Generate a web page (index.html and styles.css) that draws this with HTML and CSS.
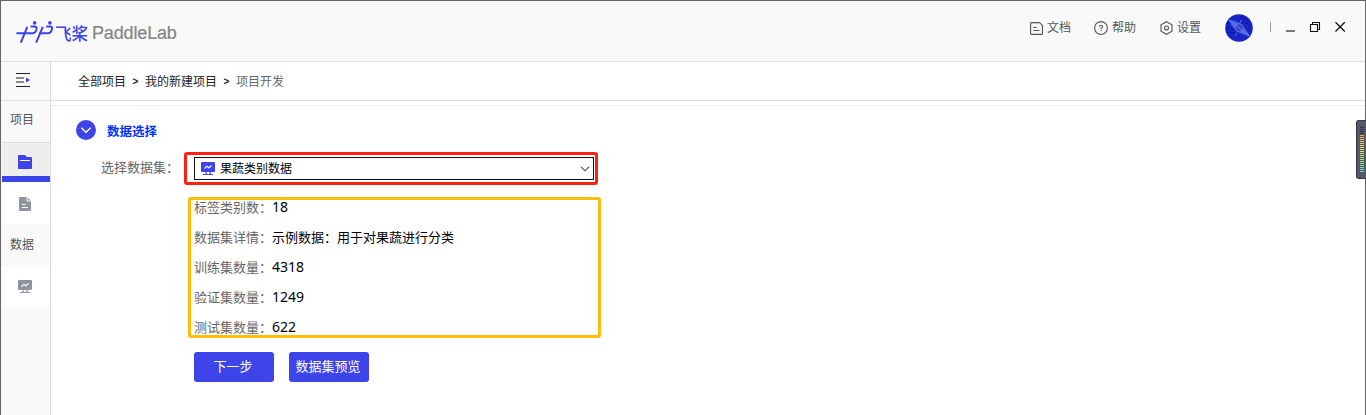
FILE: index.html
```html
<!DOCTYPE html>
<html lang="zh-CN">
<head>
<meta charset="utf-8">
<title>PaddleLab</title>
<link rel="stylesheet" href="styles.css">
</head>
<body>
<svg width="0" height="0" class="defs">
  <symbol id="monitor" viewBox="0 0 14 13">
    <path d="M1 0h12q1 0 1 1v8q0 1-1 1H1q-1 0-1-1V1q0-1 1-1zM4.5 10h1.2v2H4.5zM8.5 10h1.2v2H8.5zM2 12h10v1H2z" fill="currentColor"/>
    <path d="M3.5 6.5 6 4.2l1.8 1.7L10.5 3.5" fill="none" stroke="#fff" stroke-width="1.1"/>
  </symbol>
</svg>
<div class="window">
  <header class="header">
    <div class="brand">
      <svg width="38" height="24" viewBox="0 0 38 24" fill="none" stroke="#3b42e8" stroke-width="2">
        <path d="M.5 12.2H16.5Q19.2 12.2 20.3 9Q21.4 5.4 18.4 5.4H14.5M11.3 5.8 4.8 21.6"/>
        <path d="M23 12.2H32Q34.7 12.2 35.8 9Q36.9 5.4 33.9 5.4H30.2M26.8 5.8 20.2 21.6"/>
        <g fill="#3b42e8" stroke="none"><circle cx="18.6" cy="1.9" r="1.8"/><circle cx="33.9" cy="1.9" r="1.8"/></g>
      </svg>
      <span class="brand-cn">飞桨</span>
      <span class="brand-en">PaddleLab</span>
    </div>
    <nav class="tools">
      <a class="tool doc"><svg width="13" height="13" viewBox="0 0 13 13"><path d="M1.5.6h8l2.9 2.8v8q0 1-1 1H1.6q-1 0-1-1V1.6q0-1 .9-1zM3.2 5.5h3.6M3.2 8.5h6.3"/></svg>文档</a>
      <a class="tool help"><svg width="14" height="14" viewBox="0 0 14 14"><circle cx="7" cy="7" r="6.4"/><path d="M5.4 5.8Q5.5 4.2 7 4.2T8.6 5.7Q8.5 6.5 7 7.3V8.3M7 9.2v1"/></svg>帮助</a>
      <a class="tool settings"><svg width="13" height="14" viewBox="0 0 13 14"><path d="M6.5.7 12 3.8v6.4l-5.5 3.1L1 10.2V3.8z"/><circle cx="6.5" cy="7" r="2"/></svg>设置</a>
      <svg class="avatar" width="28" height="28" viewBox="0 0 28 28">
        <circle cx="14" cy="14" r="13.8" fill="#1724c4"/>
        <path d="M1 10q7-4 11 1M1 15q5-3 9 1M2 19q6-2 10 2M14 3q7 0 10 5M17 8q6 0 9 6M19 18q4-1 7-1" fill="none" stroke="#0e18a2"/>
        <path d="M3.5 5.5Q14 7 18 12T25.5 22.5Q15 20 10.5 16T3.5 5.5z" fill="#4664e5"/>
        <circle cx="14.2" cy="13.8" r="4" fill="#3543bd" stroke="#6878e4" stroke-width=".8"/>
        <path d="m4 6 20 16M16.5 6l-1.5 3M12 19l-2 3" stroke="#7189ee" stroke-width=".8"/>
      </svg>
      <i class="divider"></i>
      <svg class="controls" width="62" height="12" viewBox="0 0 62 12" fill="none" stroke="#111" stroke-width="1.1">
        <path d="M1 10h9" stroke="#777" stroke-width="2"/>
        <path d="M25.5 3.5h7v7h-7zM27.5 3.5v-2h7v7h-2"/>
        <path d="m50.5 1.2 9.3 9.3M59.8 1.2l-9.3 9.3" stroke-width="1.3"/>
      </svg>
    </nav>
  </header>
  <div class="body">
    <aside class="sidebar">
      <div class="toggle">
        <svg width="14" height="14" viewBox="0 0 14 14"><path d="M0 .5h14M0 5h8M0 9h8M0 13.5h14" stroke="#222" stroke-width="1.2"/><path d="m10 4.5 4 2.5-4 2.5z" fill="#3b42e8"/></svg>
      </div>
      <div class="group first">项目</div>
      <div class="item active">
        <svg width="14" height="14" viewBox="0 0 14 14"><path d="M1 0h6l2 2h4q1 0 1 1v10q0 1-1 1H1q-1 0-1-1V1q0-1 1-1z" fill="#3d45ea"/><path d="M2 5.5h10" stroke="#fff"/></svg>
      </div>
      <div class="item file">
        <svg width="12" height="14" viewBox="0 0 12 14"><path d="M1 0h7l4 4v9q0 1-1 1H1q-1 0-1-1V1q0-1 1-1z" fill="#9093a0"/><path d="M8 0v4h4M3 7.5h3.5M3 10.5h6" stroke="#fff" fill="none"/></svg>
      </div>
      <div class="group">数据</div>
      <div class="item data"><svg width="14" height="13"><use href="#monitor"/></svg></div>
    </aside>
    <main class="main">
      <div class="crumbs"><span>全部项目</span><b>&gt;</b><span>我的新建项目</span><b>&gt;</b><span class="current">项目开发</span></div>
      <div class="rule"></div>
      <section class="panel">
        <h2 class="title">
          <svg width="20" height="20" viewBox="0 0 20 20" fill="none"><circle cx="10" cy="10" r="10" fill="#3d45ea"/><path d="m5.3 7.8 4.7 4.5 4.7-4.5" stroke="#fff" stroke-width="1.5"/></svg>
          <span>数据选择</span>
        </h2>
        <div class="field">
          <label class="label">选择数据集：</label>
          <div class="highlight">
            <div class="select">
              <svg width="14" height="13"><use href="#monitor"/></svg>
              <span>果蔬类别数据</span>
              <svg class="caret" width="10" height="6" viewBox="0 0 10 6" fill="none"><path d="m1 .8 4 4 4-4" stroke="#444" stroke-width="1.1"/></svg>
            </div>
          </div>
        </div>
        <dl class="details">
          <div><dt>标签类别数：</dt><dd class="num">18</dd></div>
          <div><dt>数据集详情：</dt><dd>示例数据：用于对果蔬进行分类</dd></div>
          <div><dt>训练集数量：</dt><dd class="num">4318</dd></div>
          <div><dt>验证集数量：</dt><dd class="num">1249</dd></div>
          <div><dt>测试集数量：</dt><dd class="num">622</dd></div>
        </dl>
        <div class="actions"><button>下一步</button><button>数据集预览</button></div>
      </section>
    </main>
  </div>
  <div class="meter"><i></i></div>
</div>
</body>
</html>
```

FILE: styles.css
```css
* { box-sizing: border-box; }
body { margin: 0; font: 13px/14px "Noto Sans CJK SC", sans-serif; color: #000; overflow: hidden; }
svg { display: block; flex: none; }
.defs { position: absolute; }
.window { height: 415px; border: 1px solid #666; border-bottom: 0; display: flex; flex-direction: column; background: #fff; position: relative; }
.header { height: 61px; flex: none; border-bottom: 1px solid #ddd; background: #f9f9f9; display: flex; justify-content: space-between; }
.brand { display: flex; align-items: center; padding: 4px 0 0 15px; height: 60px; }
.brand-cn { color: #3b42e8; font-size: 16.5px; line-height: 20px; font-weight: 500; width: 38px; padding-left: 1px; white-space: nowrap; }
.brand-en { color: #858585; font: 18px/20px "Liberation Sans", sans-serif; letter-spacing: -.15px; -webkit-text-stroke: .2px #858585; }
.tools { display: flex; align-items: center; height: 52px; color: #555; font-size: 12px; padding-right: 18px; }
.tool { display: flex; align-items: center; gap: 4px; }
.tool svg { fill: none; stroke: #555; stroke-width: 1.1; margin-top: 2px; }
.help { margin-left: 23px; }
.settings { margin-left: 24px; }
.avatar { margin-left: 24px; margin-top: 2px; }
.divider { width: 1px; height: 10px; background: #999; margin: 0 14px 0 17px; }
.body { display: flex; flex: 1; min-height: 0; }
.sidebar { width: 50px; flex: none; border-right: 1px solid #ddd; background: #f9f9f9; }
.toggle { height: 39px; border-bottom: 1px solid #ddd; padding: 11px 0 0 15px; }
.group { height: 42px; line-height: 39px; padding-left: 9px; color: #555; font-size: 12px; }
.first { height: 41px; line-height: 36px; }
.item { margin-left: 1px; padding-right: 2px; display: flex; justify-content: center; align-items: center; background: #fff; color: #9093a0; }
.active { height: 40px; background: #eee; border-top: 1px solid #ddd; border-bottom: 6px solid #3d45ea; padding-top: 5px; }
.file { height: 42px; padding-top: 2px; }
.data { height: 40px; }
.main { flex: 1; }
.crumbs { height: 39px; border-bottom: 1px solid #ddd; display: flex; align-items: center; padding-left: 27px; font-size: 12px; color: #222; }
.crumbs b { font: 700 10px/12px "Liberation Sans", sans-serif; width: 19px; text-align: center; padding-top: 2px; }
.crumbs .current { color: #666; }
.rule { height: 5px; border-bottom: 1px solid #eee; }
.panel { padding: 14px 0 0 25px; }
.title { margin: 0; display: flex; align-items: center; gap: 11px; height: 20px; color: #0032ff; font-size: 12.5px; font-weight: 700; }
.title span { padding-top: 2px; }
.field { display: flex; margin-top: 12px; padding-left: 25px; }
.label { width: 83px; color: #666; line-height: 29px; }
.highlight { width: 414px; height: 33px; border: 3px solid #ff2015; border-radius: 3px; padding: 2px 1px 2px 7px; }
.select { height: 23px; border: 1px solid #111; display: flex; align-items: center; gap: 5px; padding: 0 3px 0 6px; font-size: 12px; color: #000; }
.select svg { color: #3d45ea; }
.select span { padding-bottom: 1px; }
.select .caret { margin-left: auto; }
.details { margin: 12px 0 0 112px; width: 413px; height: 141px; border: 3px solid #ffbc08; border-radius: 3px; padding-left: 3px; display: flex; flex-direction: column; gap: 16px; }
.details div { display: flex; height: 14px; line-height: 13px; }
.details dt { color: #666; width: 78px; }
.details dd { margin: 0; }
.details .num { font: 14px/13px "Noto Sans", sans-serif; }
.actions { display: flex; gap: 15px; padding-left: 118px; margin-top: 14px; }
.actions button { width: 80px; height: 30px; border: 0; border-radius: 3px; padding: 0 2px 2px 0; background: #3d45ea; color: #fff; font: 13px/28px "Noto Sans CJK SC", sans-serif; }
.meter { position: absolute; right: -1px; top: 119px; width: 10px; height: 59px; background: #555967; border: 1px solid #343746; border-right: 0; border-radius: 3px 0 0 3px; padding: 6px 2px 0 3px; }
.meter i { display: block; height: 46px; background: repeating-linear-gradient(transparent 0 1px, #555967 1px 2px), linear-gradient(#303342 0 8px, #e8a44c 8px, #f0df62 20px, #a6e477 32px, #65dfce 46px); }
```
